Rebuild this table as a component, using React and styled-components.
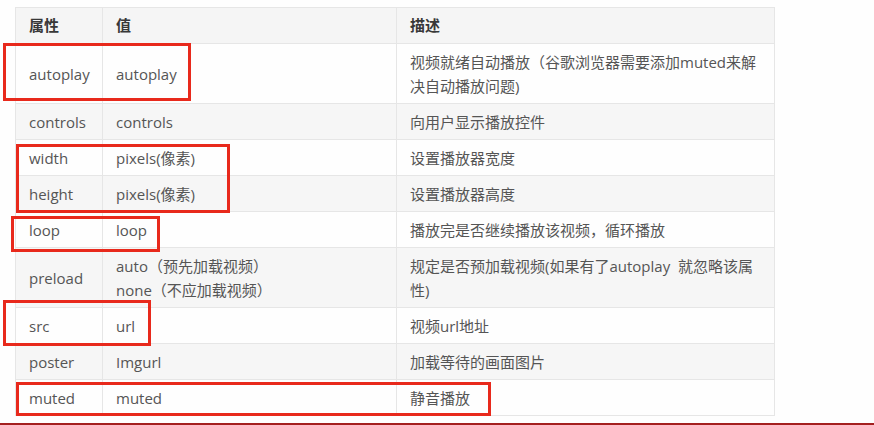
import React from 'react';
import styled, { createGlobalStyle } from 'styled-components';

const GlobalStyle = createGlobalStyle`
    html, body {
        margin: 0;
        padding: 0;
        background: #fefefe;
    }
`

const rows = [
    { name: 'autoplay', value: ['autoplay'], desc: '视频就绪自动播放（谷歌浏览器需要添加muted来解决自动播放问题)' },
    { name: 'controls', value: ['controls'], desc: '向用户显示播放控件' },
    { name: 'width', value: ['pixels(像素)'], desc: '设置播放器宽度' },
    { name: 'height', value: ['pixels(像素)'], desc: '设置播放器高度' },
    { name: 'loop', value: ['loop'], desc: '播放完是否继续播放该视频，循环播放' },
    { name: 'preload', value: ['auto（预先加载视频）', 'none（不应加载视频）'], desc: '规定是否预加载视频(如果有了autoplay\u00a0 就忽略该属性)' },
    { name: 'src', value: ['url'], desc: '视频url地址' },
    { name: 'poster', value: ['Imgurl'], desc: '加载等待的画面图片' },
    { name: 'muted', value: ['muted'], desc: '静音播放' },
]

// red marker boxes drawn over the screenshot
const marks = [
    { left: 3, top: 43, width: 188, height: 58 },
    { left: 16, top: 144, width: 214, height: 69 },
    { left: 11, top: 216, width: 149, height: 36 },
    { left: 3, top: 300, width: 148, height: 46 },
    { left: 16, top: 382, width: 475, height: 34 },
]

const App = () => {
    return (
        <Page>
            <GlobalStyle />
            <Table>
                <colgroup>
                    <col style={{ width: 87 }} />
                    <col style={{ width: 294 }} />
                    <col style={{ width: 378 }} />
                </colgroup>
                <thead>
                    <tr>
                        <Th>属性</Th>
                        <Th>值</Th>
                        <Th>描述</Th>
                    </tr>
                </thead>
                <tbody>
                    {rows.map((r, i) => (
                        <Row key={r.name} $striped={i % 2 === 1}>
                            <Td>{r.name}</Td>
                            <Td>
                                {r.value.map((v, j) => (
                                    <Line key={j}>{v}</Line>
                                ))}
                            </Td>
                            <Td>{r.desc}</Td>
                        </Row>
                    ))}
                </tbody>
            </Table>
            {marks.map((m, i) => (
                <Mark key={i} $left={m.left} $top={m.top} $width={m.width} $height={m.height} />
            ))}
        </Page>
    )
}

export default App;

const Page = styled.div`
    position: relative;
    box-sizing: border-box;
    width: 874px;
    height: 425px;
    padding: 7px 0 0 15px;
    border-bottom: 2px solid #a41f1f;
    overflow: hidden;
    font-family: "Open Sans", "Noto Sans CJK SC", sans-serif;
    font-size: 15px;
    color: #555;
`
const Table = styled.table`
    border-collapse: collapse;
    table-layout: fixed;
    width: 759px;
    border: 1px solid #e6e6e6;
`
const Th = styled.th`
    height: 36px;
    box-sizing: border-box;
    background: #f5f5f5;
    text-align: left;
    font-weight: 700;
    color: #383838;
    padding: 0 12px 0 13px;
    line-height: 23px;
    border: 1px solid #e6e6e6;
`
const Row = styled.tr`
    background: ${pr => pr.$striped ? '#f6f6f6' : '#fefefe'};
`
const Td = styled.td`
    padding: 5.5px 12px 5.5px 13px;
    line-height: 24px;
    vertical-align: middle;
    border: 1px solid #e6e6e6;
`
const Line = styled.div`
    white-space: nowrap;
`
const Mark = styled.div`
    position: absolute;
    box-sizing: border-box;
    left: ${pr => pr.$left}px;
    top: ${pr => pr.$top}px;
    width: ${pr => pr.$width}px;
    height: ${pr => pr.$height}px;
    border: 3px solid #e8291c;
    pointer-events: none;
`
